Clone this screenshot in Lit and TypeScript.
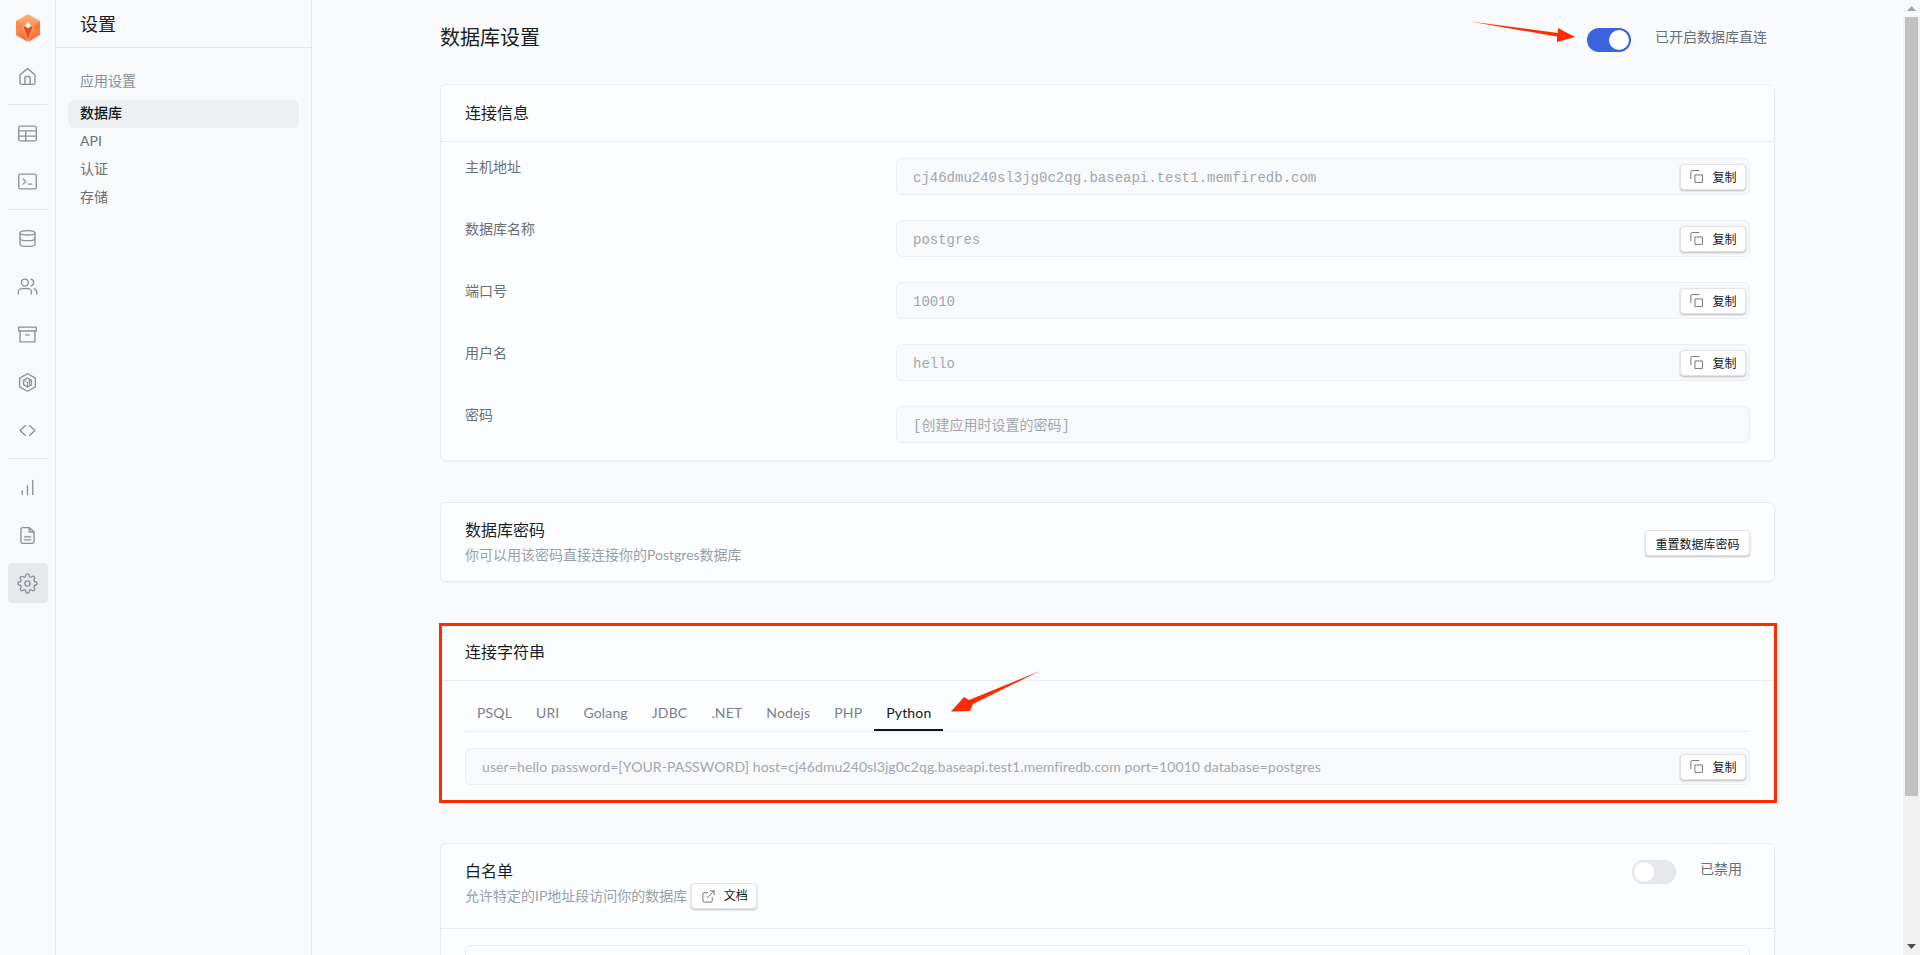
import { LitElement, html, css, svg } from "lit";
import { customElement } from "lit/decorators.js";

const ic = (body: unknown, size = 21, sw = 1.55) => html`<svg width=${size} height=${size} viewBox="0 0 24 24" fill="none" stroke="currentColor" stroke-width=${sw} stroke-linecap="round" stroke-linejoin="round">${body}</svg>`;

const icons = {
  home: svg`<path d="M3.500 10 12 3l8.500 7v9a2 2 0 0 1-2 2h-13a2 2 0 0 1-2-2z"/><path d="M9 21v-7.500a1.500 1.500 0 0 1 1.500-1.500h3a1.500 1.500 0 0 1 1.500 1.500V21"/>`,
  table: svg`<rect x="2" y="3.500" width="20" height="17" rx="2"/><path d="M2 9h20M2 15h20M10 9v11.500"/>`,
  term: svg`<rect x="2" y="3.500" width="20" height="17" rx="2"/><path d="m7 9 3 3-3 3M13 15h4"/>`,
  db: svg`<ellipse cx="12" cy="5.500" rx="8.500" ry="2.500"/><path d="M3.500 5.500v13c0 1.400 3.800 2.500 8.500 2.500s8.500-1.100 8.500-2.500v-13"/><path d="M3.500 12c0 1.400 3.800 2.500 8.500 2.500s8.500-1.100 8.500-2.500"/>`,
  users: svg`<path d="M16.500 20.500v-2a4 4 0 0 0-4-4h-7a4 4 0 0 0-4 4v2"/><circle cx="9" cy="7.500" r="4"/><path d="M22.500 20.500v-2a4 4 0 0 0-3-3.870M16 3.600a4 4 0 0 1 0 7.750"/>`,
  archive: svg`<path d="M3.500 8v12.500h17V8"/><rect x="2" y="3.500" width="20" height="4.500"/><path d="M10 12.500h4"/>`,
  pkg: svg`<path d="M12 2 21 7v10l-9 5-9-5V7z"/><path d="m12 7 4.500 2.500v5L12 17l-4.500-2.500v-5z"/><path d="M12 12v5M12 12 7.500 9.500M12 12l4.500-2.500M14.300 8.300v6" stroke-width="1.100"/>`,
  code: svg`<path d="m9.500 6.500L3.500 12l6 5.500M14.500 6.500l6 5.500-6 5.500"/>`,
  chart: svg`<path d="M18 4v16M12 10v10M6 16v4"/>`,
  doc: svg`<path d="M14 3H6.500a2 2 0 0 0-2 2v14a2 2 0 0 0 2 2h11a2 2 0 0 0 2-2V8z"/><path d="M14 3v5h5.500M8.500 13.500h7M8.500 17h7"/>`,
  gear: svg`<circle cx="12" cy="12" r="3"/><path d="M19.400 15a1.650 1.650 0 0 0 .33 1.820l.06.06a2 2 0 1 1-2.830 2.830l-.06-.06a1.650 1.650 0 0 0-2.820 1.170V21a2 2 0 1 1-4 0v-.09A1.650 1.650 0 0 0 7.260 19.700l-.06.06a2 2 0 1 1-2.830-2.830l.06-.06a1.650 1.650 0 0 0-1.170-2.820H3a2 2 0 1 1 0-4h.09A1.650 1.650 0 0 0 4.300 7.260l-.06-.06a2 2 0 1 1 2.830-2.830l.06.06A1.650 1.650 0 0 0 10 3.260V3a2 2 0 1 1 4 0v.09a1.650 1.650 0 0 0 2.820 1.170l.06-.06a2 2 0 1 1 2.830 2.830l-.06.06A1.650 1.650 0 0 0 20.740 10H21a2 2 0 1 1 0 4h-.09a1.650 1.650 0 0 0-1.510 1z"/>`,
  copy: svg`<rect x="9.500" y="9.500" width="12" height="12" stroke-linecap="butt"/><path d="M3 15.500V4.500A2 2 0 0 1 5 2.500h11"/>`,
  ext: svg`<path d="M18 13.500V19a2 2 0 0 1-2 2H5a2 2 0 0 1-2-2V8a2 2 0 0 1 2-2h5.500M15 3h6v6M10 14 21 3"/>`,
};

const railGroups = [
  [icons.home],
  [icons.table, icons.term],
  [icons.db, icons.users, icons.archive, icons.pkg, icons.code],
  [icons.chart, icons.doc, icons.gear],
];

const tabs = ["PSQL", "URI", "Golang", "JDBC", ".NET", "Nodejs", "PHP", "Python"];

@customElement("app-root")
export class AppRoot extends LitElement {
  static styles = css`
    :host { display: block; height: 955px; overflow: hidden; font-family: Lato, "Noto Sans CJK SC", sans-serif; font-size: 14px; color: #1a1e23; background: #f9fafb; }
    * { box-sizing: border-box; }
    .app { display: flex; height: 955px; position: relative; overflow: hidden; }
    .rail { width: 56px; flex: none; border-right: 1px solid #e6e8eb; background: #f8f9fb; display: flex; flex-direction: column; align-items: center; }
    .logo { height: 56px; flex: none; display: flex; align-items: center; justify-content: center; }
    .group { display: flex; flex-direction: column; gap: 8px; }
    .rdiv { width: 39px; height: 1px; background: #e6e8eb; margin: 8px 0; margin-left: -1px; }
    .ri { width: 40px; height: 40px; border-radius: 4px; display: flex; align-items: center; justify-content: center; color: #8b9197; }
    .ri.on { background: #e6e8eb; }
    .side { width: 256px; flex: none; border-right: 1px solid #e6e8eb; background: #f8f9fb; }
    .sh { height: 48px; border-bottom: 1px solid #e6e8eb; padding-left: 24px; font-size: 18px; line-height: 48px; }
    .sl { padding: 23px 12px 0; display: flex; flex-direction: column; }
    .slabel { height: 20px; line-height: 20px; padding-left: 12px; margin-bottom: 9px; color: #889096; }
    .si { height: 28px; line-height: 25px; padding-left: 12px; border-radius: 6px; color: #687076; }
    .si.on { background: #eeeff1; color: #11181c; font-weight: 500; }
    .main { flex: 1; min-width: 0; padding-left: 128px; overflow: hidden; }
    .wrap { width: 1335px; display: flex; flex-direction: column; }
    .top { height: 84px; display: flex; align-items: center; position: relative; }
    .top h1 { font-size: 20px; font-weight: 400; margin: -12px 0 0; flex: 1; }
    .toggle { width: 44px; height: 24px; border-radius: 12px; padding: 2px; display: flex; flex: none; }
    .toggle i { width: 20px; height: 20px; border-radius: 50%; background: #fff; display: block; }
    .toggle.on { background: #3b63dd; justify-content: flex-end; }
    .toggle.off { background: #e6e8eb; box-shadow: inset 0 0 0 1px #e3e5e8; }
    .toplabel { color: #687076; margin: 0 8px 8px 24px; }
    .topright { display: flex; align-items: center; margin-top: -4px; }
    .card { background: #fcfdff; border: 1px solid #e9ebee; border-radius: 6px; box-shadow: 0 1px 2px rgba(0,0,0,.04); position: relative; margin-bottom: 41px; }
    .ch { height: 57px; padding: 0 24px 3px; display: flex; align-items: center; font-size: 16px; border-bottom: 1px solid #e9ebee; }
    .rows { padding: 16px 24px 17px; display: flex; flex-direction: column; gap: 25px; }
    .row { display: grid; grid-template-columns: 431px 854px; }
    .rl { color: #687076; line-height: 20px; margin-top: -1px; }
    .inp { height: 37px; border: 1px solid #eceef0; border-radius: 6px; background: #f8f9fa; padding: 0 3px 0 16px; display: flex; align-items: center; color: #a3a7ab; }
    .val { flex: 1; }
    .mono .val { font-family: "Liberation Mono", "Noto Sans CJK SC", monospace; font-size: 14px; padding-top: 2px; }
    .mono .val.cjk { padding: 0 0 2px; }
    .btn { height: 26px; border-radius: 4px; background: #fff; border: 1px solid #e1e3e6; box-shadow: 0 1px 2px rgba(0,0,0,.25); font-size: 12px; color: #11181c; display: inline-flex; align-items: center; justify-content: center; gap: 8px; flex: none; }
    .btn svg { color: #687076; }
    .copy { width: 66px; }
    .pw { height: 80px; display: flex; align-items: center; justify-content: space-between; padding: 0 24px; }
    .t { font-size: 16px; line-height: 22px; }
    .d { color: #9a9fa5; line-height: 20px; display: flex; align-items: center; gap: 4px; }
    .pw .t { margin-top: -1px; }
    .pw .d { margin-top: 4px; }
    .wh .d { margin-top: 1px; }
    .reset { width: 105px; margin-top: 2px; }
    .tabs { margin: 0 24px; height: 51px; display: flex; border-bottom: 1px solid #e9ebee; }
    .tab { padding: 0 12px; color: #7b8087; height: 51px; line-height: 64px; letter-spacing: .15px; }
    .tab.on { color: #11181c; border-bottom: 2px solid #11181c; margin-bottom: -1px; height: 50px; }
    .conn { margin: 16px 24px 17px; letter-spacing: .1px; }
    .wh { height: 85px; display: flex; justify-content: space-between; padding: 16px 24px 0; border-bottom: 1px solid #e9ebee; }
    .whr { display: flex; gap: 24px; color: #687076; line-height: 18px; margin-right: 8px; }
    .whbody { padding: 16px 24px; }
    .whbox { height: 60px; border: 1px solid #e9ebee; border-radius: 6px; }
    .tight { margin-bottom: 40px; }
    .red { position: absolute; left: -2px; top: -1px; width: 1338px; height: 180px; border: 3px solid #ff2a00; pointer-events: none; }
    .bar { width: 17px; flex: none; background: #f1f1f1; display: flex; flex-direction: column; align-items: center; height: 955px; }
    .btnb { height: 17px; flex: none; display: flex; align-items: center; justify-content: center; width: 100%; background: #f8f9fa; }
    .btnb.low { background: #f1f1f1; }
    .thumb { width: 13px; height: 779px; background: #c1c1c1; flex: none; }
    .sp { flex: 1; }
    .arrows { position: absolute; left: 0; top: 0; pointer-events: none; }
  `;

  private logo() {
    return html`<svg width="28" height="30" viewBox="0 0 28 30">
      <defs><linearGradient id="lg" x1="0" y1="0" x2="0" y2="1"><stop offset="0" stop-color="#fcb47a"/><stop offset="1" stop-color="#f9622a"/></linearGradient></defs>
      <polygon points="14,1 26,8 26,22 14,29 2,22 2,8" fill="url(#lg)"/>
      <polygon points="2,8 2,22 9,14" fill="#fb8a45"/>
      <polygon points="26,8 26,22 19,14" fill="#fb7a36"/>
      <polygon points="14,28 8.500,14 19.500,14" fill="#ee4a1c"/>
      <polygon points="14,8.500 17,12.500 14,15.500 11,12.500" fill="#fff"/>
      <path d="M14 1 2 8M14 1l12 7M14 29 9 14M14 29l5-15" stroke="#ffd9bf" stroke-width=".7" fill="none"/>
    </svg>`;
  }

  private copy() {
    return html`<div class="btn copy">${ic(icons.copy, 15, 1.5)}<span>复制</span></div>`;
  }

  render() {
    const rows = [
      ["主机地址", "cj46dmu240sl3jg0c2qg.baseapi.test1.memfiredb.com"],
      ["数据库名称", "postgres"],
      ["端口号", "10010"],
      ["用户名", "hello"],
    ];
    return html`<div class="app">
      <nav class="rail">
        <div class="logo">${this.logo()}</div>
        ${railGroups.map((g, i) => html`
          ${i > 0 ? html`<div class="rdiv"></div>` : ""}
          <div class="group">${g.map((b) => html`<div class="ri ${b === icons.gear ? "on" : ""}">${ic(b)}</div>`)}</div>`)}
      </nav>
      <aside class="side">
        <div class="sh">设置</div>
        <div class="sl">
          <div class="slabel">应用设置</div>
          <div class="si on">数据库</div>
          <div class="si">API</div>
          <div class="si">认证</div>
          <div class="si">存储</div>
        </div>
      </aside>
      <main class="main"><div class="wrap">
        <div class="top">
          <h1>数据库设置</h1>
          <div class="topright"><div class="toggle on"><i></i></div><span class="toplabel">已开启数据库直连</span></div>
        </div>
        <section class="card">
          <div class="ch">连接信息</div>
          <div class="rows">
            ${rows.map(([l, v]) => html`<div class="row"><div class="rl">${l}</div><div class="inp mono"><span class="val">${v}</span>${this.copy()}</div></div>`)}
            <div class="row"><div class="rl">密码</div><div class="inp mono"><span class="val cjk">[创建应用时设置的密码]</span></div></div>
          </div>
        </section>
        <section class="card pw">
          <div><div class="t">数据库密码</div><div class="d">你可以用该密码直接连接你的Postgres数据库</div></div>
          <div class="btn reset">重置数据库密码</div>
        </section>
        <section class="card tight">
          <div class="ch">连接字符串</div>
          <div class="tabs">${tabs.map((t) => html`<div class="tab ${t === "Python" ? "on" : ""}">${t}</div>`)}</div>
          <div class="inp conn"><span class="val">user=hello password=[YOUR-PASSWORD] host=cj46dmu240sl3jg0c2qg.baseapi.test1.memfiredb.com port=10010 database=postgres</span>${this.copy()}</div>
          <div class="red"></div>
        </section>
        <section class="card">
          <div class="wh">
            <div><div class="t">白名单</div><div class="d">允许特定的IP地址段访问你的数据库<div class="btn copy">${ic(icons.ext, 15, 1.5)}<span>文档</span></div></div></div>
            <div class="whr"><div class="toggle off"><i></i></div><span>已禁用</span></div>
          </div>
          <div class="whbody"><div class="whbox"></div></div>
        </section>
      </div></main>
      <div class="bar">
        <div class="btnb"><svg width="9" height="5" viewBox="0 0 9 5"><path d="M4.500 0 9 5H0z" fill="#a3a3a3"/></svg></div>
        <div class="thumb"></div>
        <div class="sp"></div>
        <div class="btnb low"><svg width="9" height="5" viewBox="0 0 9 5"><path d="M4.500 5 9 0H0z" fill="#505050"/></svg></div>
      </div>
      <svg class="arrows" width="1920" height="955">
        <polygon points="1470,21.500 1558,33 1558,28 1575,37 1557,42 1557,36.500" fill="#ff2a00"/>
        <polygon points="1040,671 969,700 964,697 951,711.600 970,711 973,704" fill="#ff2a00"/>
      </svg>
    </div>`;
  }
}
